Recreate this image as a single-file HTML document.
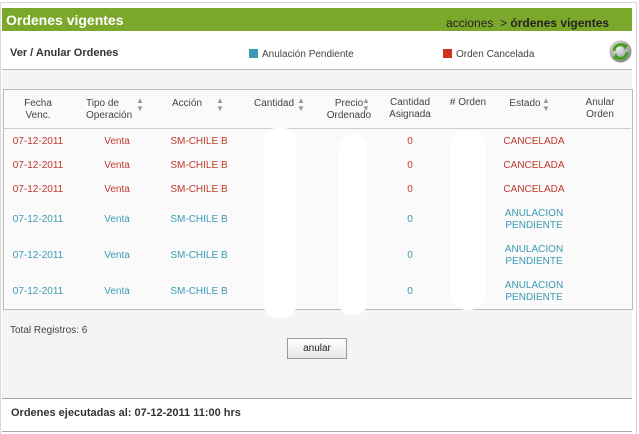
<!DOCTYPE html>
<html><head><style>
body{margin:0;width:639px;height:433px;background:#fff;font-family:"Liberation Sans",sans-serif;font-size:10px;position:relative;overflow:hidden}
.a{position:absolute}
.hdr{left:2px;top:8px;width:630px;height:23px;background:#7ba82a}
.c{position:absolute;text-align:center;transform:translateX(-50%);white-space:nowrap;line-height:12px}
.r{color:#c0392b}.b{color:#3a9bb5}
.h{color:#444;line-height:12px}
.arr{font-size:8px;color:#999;line-height:8px}
</style></head><body>
<div class="a" style="left:0;top:2px;width:635px;height:431px;border:1px solid #d8d8d8;border-bottom:none"></div>
<div class="a hdr"></div>
<div class="a" style="left:6px;top:12px;color:#fff;font-weight:bold;font-size:14px">Ordenes vigentes</div>
<div class="a" style="left:446px;top:16px;font-size:12px;color:#222">acciones&nbsp; &gt; <b>órdenes vigentes</b></div>
<div class="a" style="left:10px;top:47px;font-weight:bold;font-size:11px;color:#333">Ver / Anular Ordenes</div>
<div class="a" style="left:249px;top:49px;width:9px;height:9px;background:#3a9bb5"></div>
<div class="a" style="left:262px;top:49px;color:#444">Anulación Pendiente</div>
<div class="a" style="left:443px;top:49px;width:9px;height:9px;background:#d03020"></div>
<div class="a" style="left:456px;top:49px;color:#444">Orden Cancelada</div>
<svg class="a" style="left:609px;top:40px" width="23" height="23" viewBox="0 0 23 23">
<defs><radialGradient id="g" cx="40%" cy="35%" r="65%"><stop offset="0" stop-color="#f2f2f2"/><stop offset="1" stop-color="#8a8a8a"/></radialGradient></defs>
<circle cx="11.5" cy="11.5" r="11" fill="url(#g)"/>
<path d="M5 11 A6.5 6.5 0 0 1 16 6.5" fill="none" stroke="#45a020" stroke-width="3"/>
<path d="M13 3 L19 5 L16 10 Z" fill="#45a020"/>
<path d="M18 12 A6.5 6.5 0 0 1 7 16.5" fill="none" stroke="#45a020" stroke-width="3"/>
<path d="M10 20 L4 18 L7 13 Z" fill="#45a020"/>
</svg>
<div class="a" style="left:2px;top:69px;width:630px;height:329px;background:#f4f4f4;border-top:1px solid #bbb"></div>
<div class="a" style="left:3px;top:89px;width:628px;height:219px;background:#fafafa;border:1px solid #bbb"></div>
<div class="a" style="left:3px;top:128px;width:628px;border-top:1px solid #ccc"></div>
<div class="c h" style="left:38px;top:98px">Fecha<br>Venc.</div>
<div class="c h" style="text-align:left;transform:none;left:86px;top:98px">Tipo de<br>Operación</div><div class="a arr" style="left:136px;top:97px">▲<br>▼</div>
<div class="c h" style="left:187px;top:98px">Acción</div><div class="a arr" style="left:216px;top:97px">▲<br>▼</div>
<div class="c h" style="left:274px;top:98px">Cantidad</div><div class="a arr" style="left:297px;top:97px">▲<br>▼</div>
<div class="c h" style="left:349px;top:98px">Precio<br>Ordenado</div><div class="a arr" style="left:362px;top:97px">▲<br>▼</div>
<div class="c h" style="left:410px;top:97px">Cantidad<br>Asignada</div>
<div class="c h" style="left:468px;top:97px"># Orden</div>
<div class="c h" style="left:525px;top:98px">Estado</div><div class="a arr" style="left:542px;top:97px">▲<br>▼</div>
<div class="c h" style="left:600px;top:97px">Anular<br>Orden</div>
<div class="c r" style="left:38px;top:136px">07-12-2011</div><div class="c r" style="left:117px;top:136px">Venta</div><div class="c r" style="left:199px;top:136px">SM-CHILE B</div><div class="c r" style="left:410px;top:136px">0</div><div class="c r" style="left:534px;top:136px">CANCELADA</div>
<div class="c r" style="left:38px;top:160px">07-12-2011</div><div class="c r" style="left:117px;top:160px">Venta</div><div class="c r" style="left:199px;top:160px">SM-CHILE B</div><div class="c r" style="left:410px;top:160px">0</div><div class="c r" style="left:534px;top:160px">CANCELADA</div>
<div class="c r" style="left:38px;top:184px">07-12-2011</div><div class="c r" style="left:117px;top:184px">Venta</div><div class="c r" style="left:199px;top:184px">SM-CHILE B</div><div class="c r" style="left:410px;top:184px">0</div><div class="c r" style="left:534px;top:184px">CANCELADA</div>
<div class="c b" style="left:38px;top:214px">07-12-2011</div><div class="c b" style="left:117px;top:214px">Venta</div><div class="c b" style="left:199px;top:214px">SM-CHILE B</div><div class="c b" style="left:410px;top:214px">0</div><div class="c b" style="left:534px;top:208px">ANULACION<br>PENDIENTE</div>
<div class="c b" style="left:38px;top:250px">07-12-2011</div><div class="c b" style="left:117px;top:250px">Venta</div><div class="c b" style="left:199px;top:250px">SM-CHILE B</div><div class="c b" style="left:410px;top:250px">0</div><div class="c b" style="left:534px;top:244px">ANULACION<br>PENDIENTE</div>
<div class="c b" style="left:38px;top:286px">07-12-2011</div><div class="c b" style="left:117px;top:286px">Venta</div><div class="c b" style="left:199px;top:286px">SM-CHILE B</div><div class="c b" style="left:410px;top:286px">0</div><div class="c b" style="left:534px;top:280px">ANULACION<br>PENDIENTE</div>
<div class="a" style="left:264px;top:128px;width:32px;height:190px;background:#fff;border-radius:12px"></div>
<div class="a" style="left:339px;top:135px;width:28px;height:180px;background:#fff;border-radius:12px"></div>
<div class="a" style="left:450px;top:130px;width:36px;height:180px;background:#fff;border-radius:16px"></div>
<div class="a" style="left:10px;top:325px;color:#444">Total Registros: 6</div>
<div class="a" style="left:287px;top:338px;width:58px;height:19px;border:1px solid #999;background:linear-gradient(#fff,#e6e6e6);text-align:center;line-height:19px;color:#222">anular</div>
<div class="a" style="left:2px;top:398px;width:630px;height:32px;background:#fff;border-top:1px solid #aaa;border-bottom:1px solid #aaa"></div>
<div class="a" style="left:11px;top:407px;font-weight:bold;font-size:11px;color:#333">Ordenes ejecutadas al: 07-12-2011 11:00 hrs</div>
</body></html>
